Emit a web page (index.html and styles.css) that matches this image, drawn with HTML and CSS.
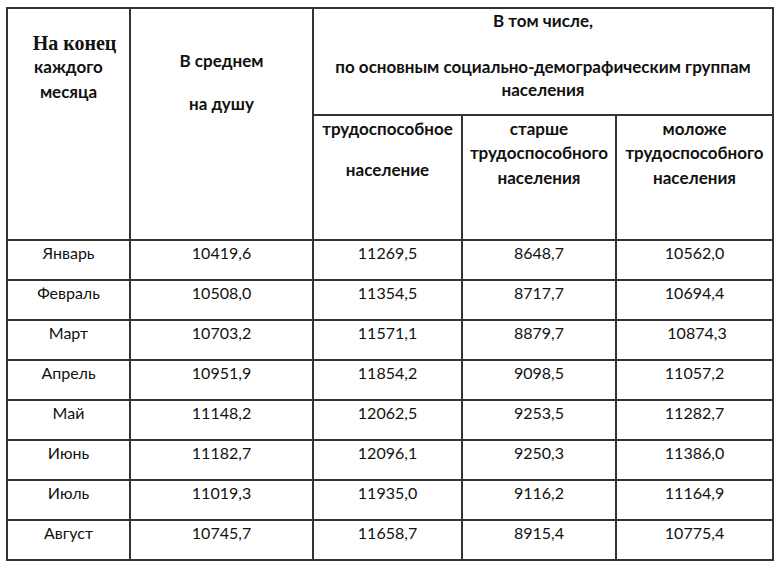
FILE: index.html
```html
<!DOCTYPE html>
<html lang="ru">
<head>
<meta charset="utf-8">
<title>Доходы</title>
<link rel="stylesheet" href="styles.css">
</head>
<body>
<table class="grid">
  <colgroup>
    <col class="c1"><col class="c2"><col class="c3"><col class="c4"><col class="c5">
  </colgroup>
  <thead>
    <tr class="h1">
      <th rowspan="2" class="month-head">
        <div class="serif-line">На конец</div>
        <div class="m-line">каждого</div>
        <div class="m-line">месяца</div>
      </th>
      <th rowspan="2" class="avg-head">
        <div class="a-line first">В среднем</div>
        <div class="a-line second">на душу</div>
      </th>
      <th colspan="3" class="group-head">
        <div class="g-line first">В том числе,</div>
        <div class="g-line second">по основным социально-демографическим группам</div>
        <div class="g-line">населения</div>
      </th>
    </tr>
    <tr class="h2">
      <th class="sub">
        <div class="s-line">трудоспособное</div>
        <div class="s-line gap">население</div>
      </th>
      <th class="sub">
        <div class="s-line">старше</div>
        <div class="s-line">трудоспособного</div>
        <div class="s-line">населения</div>
      </th>
      <th class="sub">
        <div class="s-line">моложе</div>
        <div class="s-line">трудоспособного</div>
        <div class="s-line">населения</div>
      </th>
    </tr>
  </thead>
  <tbody>
    <tr><td>Январь</td><td>10419,6</td><td>11269,5</td><td>8648,7</td><td>10562,0</td></tr>
    <tr><td>Февраль</td><td>10508,0</td><td>11354,5</td><td>8717,7</td><td>10694,4</td></tr>
    <tr><td>Март</td><td>10703,2</td><td>11571,1</td><td>8879,7</td><td class="shift">10874,3</td></tr>
    <tr><td>Апрель</td><td>10951,9</td><td>11854,2</td><td>9098,5</td><td>11057,2</td></tr>
    <tr><td>Май</td><td>11148,2</td><td>12062,5</td><td>9253,5</td><td>11282,7</td></tr>
    <tr><td>Июнь</td><td>11182,7</td><td>12096,1</td><td>9250,3</td><td>11386,0</td></tr>
    <tr><td>Июль</td><td>11019,3</td><td>11935,0</td><td>9116,2</td><td>11164,9</td></tr>
    <tr><td>Август</td><td>10745,7</td><td>11658,7</td><td>8915,4</td><td>10775,4</td></tr>
  </tbody>
</table>
</body>
</html>
```

FILE: styles.css
```css
html, body {
  margin: 0;
  padding: 0;
  background: #ffffff;
}

body {
  padding: 7px 0 0 6px;
  font-family: Lato, "Noto Sans", sans-serif;
  color: #111111;
}

.grid {
  border-collapse: collapse;
  table-layout: fixed;
  width: 766px;
}

.c1 { width: 123px; }
.c2 { width: 183px; }
.c3 { width: 149px; }
.c4 { width: 154px; }
.c5 { width: 157px; }

.grid th,
.grid td {
  border: 2px solid #333333;
  padding: 0;
  vertical-align: top;
  text-align: center;
}

.grid th {
  font-weight: 700;
  font-size: 17px;
}

.h1 { height: 107px; }
.h2 { height: 125px; }
.grid tbody tr { height: 40px; }

.grid td {
  font-size: 16px;
  line-height: 22px;
  padding-top: 1px;
}

.grid td.shift { padding-left: 5px; }

.month-head { padding-top: 0; }
.serif-line {
  font-family: "Liberation Serif", "Times New Roman", serif;
  font-size: 20px;
  line-height: 22px;
  margin-top: 23px;
  padding-left: 12px;
}
.m-line { line-height: 25px; }

.a-line { line-height: 22px; }
.a-line.first { margin-top: 41px; }
.a-line.second { margin-top: 21px; }

.g-line { line-height: 23px; }
.g-line.first { margin-top: 0; }
.g-line.second { margin-top: 23px; }

.s-line { line-height: 25px; }
.grid th.sub { padding-top: 0; }
.s-line.gap { margin-top: 16px; }
.sub .s-line:nth-child(2):not(.gap) { margin-top: -1px; }
```
